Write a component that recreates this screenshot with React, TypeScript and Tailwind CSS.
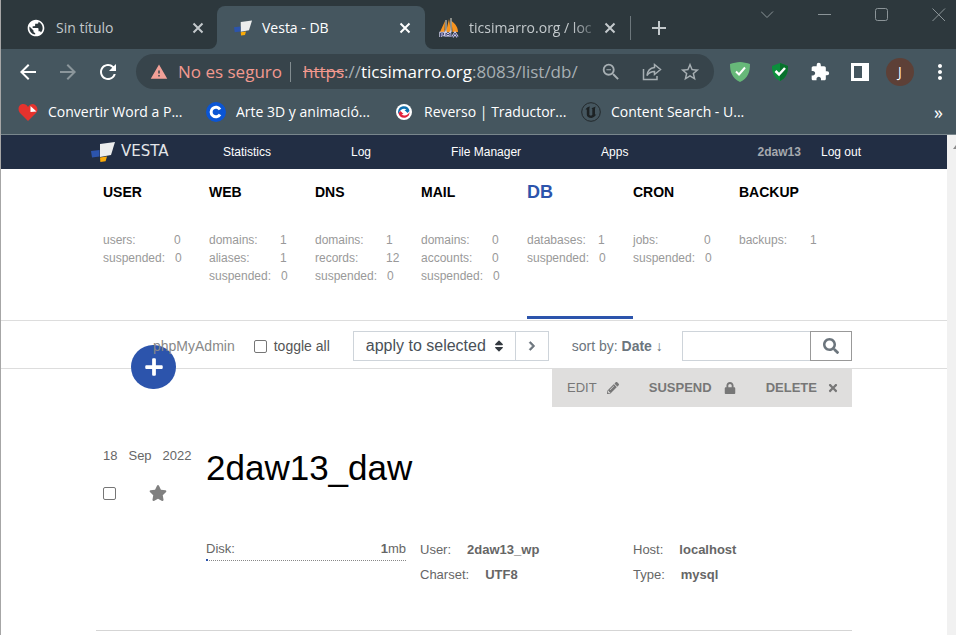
import React from "react";
import {
  MdArrowBack,
  MdArrowForward,
  MdExtension,
  MdMoreVert,
  MdPublic,
  MdRefresh,
  MdStarBorder,
  MdWarning,
  MdZoomOut,
} from "react-icons/md";
import { FaChevronRight, FaLock, FaPencilAlt, FaPlus, FaSearch, FaSort, FaStar, FaTimes } from "react-icons/fa";

function VestaMark({ className }: { className: string }) {
  return (
    <svg className={className} viewBox="0 0 24 20" aria-hidden="true">
      <path d="M9 2 L24 0 L20 13 L9 15 Z" fill="#eceded" />
      <path d="M0 9 L8.5 8 V14.5 L1 15.5 Z" fill="#2c54ac" />
      <path d="M9 15.6 L16 14.6 L14.6 19.2 L9.4 20 Z" fill="#fbab08" />
    </svg>
  );
}

function TabFlare({ className }: { className: string }) {
  return (
    <svg className={className} viewBox="0 0 8 8" aria-hidden="true">
      <path d="M8 0 V8 H0 A8 8 0 0 0 8 0 Z" fill="#45565f" />
    </svg>
  );
}

function CloseTab({ label }: { label: string }) {
  return (
    <button type="button" aria-label={label} className="shrink-0">
      <svg className="size-4" viewBox="0 0 16 16" fill="none" stroke="currentColor" strokeWidth="2">
        <path d="M3.500 3.500 L12.500 12.500 M12.500 3.500 L3.500 12.500" />
      </svg>
    </button>
  );
}

function TabStrip() {
  return (
    <header className="flex bg-[#2d383d] pt-1.5 text-sm text-[#c3c9cc]">
      <div className="flex h-[43px] w-[216px] items-center pr-[11px] pl-[25px]">
        <MdPublic className="size-5 shrink-0 text-white" />
        <span className="ml-2.5 flex-1">Sin título</span>
        <CloseTab label="Cerrar Sin título" />
      </div>
      <div className="relative flex h-[43px] w-[208px] items-center rounded-t-lg bg-[#45565f] pr-3 pl-[17px] text-white">
        <TabFlare className="absolute bottom-0 -left-2 size-2" />
        <VestaMark className="h-4 w-[18px] shrink-0" />
        <span className="ml-2.5 flex-1">Vesta - DB</span>
        <CloseTab label="Cerrar Vesta" />
        <TabFlare className="absolute -right-2 bottom-0 size-2 -scale-x-100" />
      </div>
      <div className="flex h-[43px] w-[205px] items-center pr-3 pl-[14px]">
        <svg className="size-5 shrink-0" viewBox="0 0 20 20" aria-hidden="true">
          <path d="M6 3 L1 14 H5.500 Z M10 1 L7 14 H12 Z M12.500 3 C17 6 19 10 19 14 H13.500 Z" fill="#f79420" />
          <path d="M7 2 V14 M12 0 V14" stroke="#e8e2d4" strokeWidth="1" />
          <path d="M1.500 19 V15 H4.500 V17 H1.500 M7 19 V15 L9 17 L11 15 V19 M13.500 19 L16 15 L18.500 19" fill="none" stroke="#c9c9e4" strokeWidth="2.500" />
          <path d="M1.500 19 V15 H4.500 V17 H1.500 M7 19 V15 L9 17 L11 15 V19 M13.500 19 L16 15 L18.500 19" fill="none" stroke="#454675" strokeWidth="1" />
        </svg>
        <span className="ml-2.5 flex-1 whitespace-nowrap [mask-image:linear-gradient(to_right,black_78%,transparent)]">
          ticsimarro.org / loc
        </span>
        <CloseTab label="Cerrar ticsimarro.org" />
      </div>
      <div className="flex h-[43px] items-center">
        <span className="h-6 w-px bg-[#6d777c]" />
        <button type="button" aria-label="Nueva pestaña" className="ml-5">
          <svg className="size-4" viewBox="0 0 16 16" fill="none" stroke="currentColor" strokeWidth="2">
            <path d="M8 1 V15 M1 8 H15" />
          </svg>
        </button>
      </div>
      <div className="ml-auto flex h-4 items-center gap-[43px] pr-2.5 text-[#8b9498]">
        <button type="button" aria-label="Buscar pestañas">
          <svg className="h-3.5 w-3.5" viewBox="0 0 14 14" fill="none" stroke="currentColor">
            <path d="M0 4.500 L6 10.500 L12 4.500" />
          </svg>
        </button>
        <button type="button" aria-label="Minimizar">
          <svg className="h-3.5 w-3.5" viewBox="0 0 14 14" fill="none" stroke="currentColor">
            <path d="M0 7.500 H13" />
          </svg>
        </button>
        <button type="button" aria-label="Maximizar">
          <svg className="h-3.5 w-3.5" viewBox="0 0 14 14" fill="none" stroke="currentColor">
            <rect x="0.500" y="1.500" width="12" height="12" rx="2" />
          </svg>
        </button>
        <button type="button" aria-label="Cerrar">
          <svg className="h-3.5 w-3.5" viewBox="0 0 14 14" fill="none" stroke="currentColor">
            <path d="M0.500 1.500 L13 14 M13 1.500 L0.500 14" />
          </svg>
        </button>
      </div>
    </header>
  );
}

function AddressBar() {
  return (
    <div className="flex h-[45px] items-center bg-[#45565f] pl-[15px] text-white">
      <button type="button" aria-label="Atrás">
        <MdArrowBack className="size-6" />
      </button>
      <button type="button" aria-label="Adelante" className="ml-4 text-[#8b969b]">
        <MdArrowForward className="size-6" />
      </button>
      <button type="button" aria-label="Recargar" className="ml-4">
        <MdRefresh className="size-6" />
      </button>
      <div className="ml-4 flex h-[35px] flex-1 items-center rounded-full bg-[#37444b] pr-[13px] pl-3.5 text-[17px] text-[#a7afb3]">
        <MdWarning className="size-[18px] shrink-0 text-[#f2a097]" />
        <span className="ml-2.5 whitespace-nowrap text-[#f2998f]">No es seguro</span>
        <span className="ml-2 h-5 w-px bg-[#828c90]" />
        <div role="textbox" aria-label="Dirección" tabIndex={0} className="ml-3 flex-1 whitespace-nowrap">
          <span className="text-[#f2998f] line-through">https</span>://
          <span className="text-white">ticsimarro.org</span>:8083/list/db/
        </div>
        <button type="button" aria-label="Zoom">
          <MdZoomOut className="size-[22px]" />
        </button>
        <button type="button" aria-label="Compartir" className="ml-5">
          <svg className="size-5" viewBox="0 0 20 20" fill="none" stroke="currentColor" strokeWidth="1.500">
            <path d="M1.500 7 V17.500 H15 V14" />
            <path d="M12.500 2.500 L18.500 7.500 L12.500 12.500 V9.500 C9 9.500 7 10.500 5 13.500 C5.500 9 8 6 12.500 5.500 Z" />
          </svg>
        </button>
        <button type="button" aria-label="Añadir a marcadores" className="ml-[17px]">
          <MdStarBorder className="size-[22px]" />
        </button>
      </div>
      <button type="button" aria-label="AdGuard" className="ml-4">
        <svg className="h-5 w-5" viewBox="0 0 20 20">
          <path d="M10 0 C13 0 17 1 20 2 C20 10 18 16 10 20 C2 16 0 10 0 2 C3 1 7 0 10 0 Z" fill="#67b879" />
          <path d="M6 9.500 L9 12.500 L15 5.500" fill="none" stroke="#fff" strokeWidth="2" />
        </svg>
      </button>
      <button type="button" aria-label="Protección" className="ml-[22px]">
        <svg className="h-[18px] w-4" viewBox="0 0 16 18">
          <path d="M8 0 L16 3 C16 10 14 15 8 18 C2 15 0 10 0 3 Z" fill="#0c8f3c" />
          <path d="M8 0 L16 3 C16 10 14 15 8 18 Z" fill="#08702c" />
          <path d="M3.500 8 L7 11.500 L13 5" fill="none" stroke="#fff" strokeWidth="2.500" />
        </svg>
      </button>
      <button type="button" aria-label="Extensiones" className="ml-[22px]">
        <MdExtension className="size-5" />
      </button>
      <button type="button" aria-label="Panel lateral" className="ml-[21px] flex h-[18px] w-[18px] border-[3px] border-r-[7px] border-white" />
      <button
        type="button"
        aria-label="Perfil"
        className="ml-[17px] flex size-7 items-center justify-center rounded-full bg-[#5d4037] text-sm"
      >
        J
      </button>
      <button type="button" aria-label="Menú" className="ml-3.5 mr-1">
        <MdMoreVert className="size-6" />
      </button>
    </div>
  );
}

function Bookmarks() {
  return (
    <nav
      aria-label="Marcadores"
      className="flex h-[41px] items-center border-b border-[#79868c] bg-[#45565f] pb-1 pl-[17px] text-sm whitespace-nowrap text-white"
    >
      <a href="#word" className="flex w-[188px] items-center gap-2.5">
        <svg className="size-5" viewBox="0 0 20 20" aria-hidden="true">
          <path d="M10 19 L2 11 C-1 7 1 2 5 2 C7.500 2 9 3 10 5 C11 3 13 2 15 2 C19 3 21 8 18 11 Z" fill="#e5322d" />
          <path d="M12.500 4 L18.500 9.500 L12.500 10 Z" fill="#fff" />
        </svg>
        Convertir Word a P...
      </a>
      <a href="#arte" className="flex w-[188px] items-center gap-2.5">
        <svg className="size-5" viewBox="0 0 20 20" aria-hidden="true">
          <circle cx="10" cy="10" r="10" fill="#0b55d4" />
          <path d="M14 7.500 A4.800 4.800 0 1 0 14 12.500" fill="none" stroke="#fff" strokeWidth="3" />
        </svg>
        Arte 3D y animació...
      </a>
      <a href="#reverso" className="flex w-[187px] items-center gap-2.5">
        <svg className="size-5" viewBox="0 0 20 20" aria-hidden="true">
          <circle cx="10" cy="10" r="8" fill="#fff" />
          <path d="M4.500 12 A5.500 5.500 0 0 1 8 4.500 C12 3.500 15 5.500 15.500 9 L13.500 11 L10.500 8 L12.500 7.800 C10.500 5.500 6 7 4.500 12 Z" fill="#0e6fae" />
          <path d="M15.500 10 A5.500 5.500 0 0 1 12 15.500 C8 16.500 5 14.500 4.500 11 L6.500 9 L9.500 12 L7.500 12.200 C10 14.500 14 13.500 15.500 10 Z" fill="#e2213b" />
        </svg>
        Reverso | Traductor...
      </a>
      <a href="#unreal" className="flex items-center gap-2.5">
        <svg className="size-5" viewBox="0 0 20 20" aria-hidden="true">
          <circle cx="10" cy="10" r="9.300" fill="none" stroke="#22282b" strokeWidth="1" />
          <path d="M4.500 7.500 C5.500 5.500 7.500 4.500 9 4.500 C8.400 5.500 8.400 7 8.400 8 V13 L10 13.800 L11.300 13 V7 L10.500 6.300 L14.800 4.500 C14 5.500 14 7 14 8 V12.800 L15.300 12.300 C14 14.500 12.500 15.700 10.500 16 C7.500 16 5.800 14.500 5.800 12.500 V7.500 Z" fill="#1d2224" />
        </svg>
        Content Search - U...
      </a>
      <button type="button" aria-label="Más marcadores" className="mr-[13px] ml-auto text-lg leading-5">
        »
      </button>
    </nav>
  );
}

function TopNav() {
  return (
    <nav aria-label="Vesta" className="bg-[#222e44]">
      <div className="mx-auto flex h-[34px] w-full max-w-[774px] items-center pl-1 text-xs text-white">
        <a href="#home" className="mr-[48px] flex w-[84px] items-center gap-1.5">
          <VestaMark className="h-5 w-6 shrink-0" />
          <span className="font-['DejaVu_Sans',sans-serif] text-[15px] text-[#e4e6e9]">VESTA</span>
        </a>
        <div className="flex gap-20 whitespace-nowrap">
          <a href="#statistics">Statistics</a>
          <a href="#log">Log</a>
          <a href="#files">File Manager</a>
          <a href="#apps">Apps</a>
        </div>
        <a href="#profile" className="ml-auto font-bold text-[#a5a9ae]">
          2daw13
        </a>
        <a href="#logout" className="ml-5 whitespace-nowrap">
          Log out
        </a>
      </div>
    </nav>
  );
}

const sections: { name: string; active?: boolean; stats: [string, number][] }[] = [
  { name: "USER", stats: [["users", 0], ["suspended", 0]] },
  { name: "WEB", stats: [["domains", 1], ["aliases", 1], ["suspended", 0]] },
  { name: "DNS", stats: [["domains", 1], ["records", 12], ["suspended", 0]] },
  { name: "MAIL", stats: [["domains", 0], ["accounts", 0], ["suspended", 0]] },
  { name: "DB", active: true, stats: [["databases", 1], ["suspended", 0]] },
  { name: "CRON", stats: [["jobs", 0], ["suspended", 0]] },
  { name: "BACKUP", stats: [["backups", 1]] },
];

function SectionMenu() {
  return (
    <nav aria-label="Sections" className="border-b border-[#dddddd] pb-px">
      <div className="mx-auto grid w-full max-w-[756px] grid-cols-7 px-[7px]">
        {sections.map((s) => (
          <a
            key={s.name}
            href={"#" + s.name.toLowerCase()}
            className={
              s.active
                ? "border-b-[3px] border-[#2c54ac] pt-[11px] pb-[31px]"
                : "border-b-[3px] border-transparent pt-[11px] pb-[31px]"
            }
          >
            <span
              className={
                s.active
                  ? "block text-lg leading-6 font-bold text-[#2c54ac]"
                  : "block text-sm leading-6 font-bold text-black"
              }
            >
              {s.name}
            </span>
            <span className="mt-[27px] block text-xs leading-[18px] text-[#999999]">
              {s.stats.map(([label, value]) => (
                <span key={label} className="flex gap-2.5">
                  <span className="min-w-[61px]">{label}:</span>
                  <span>{value}</span>
                </span>
              ))}
            </span>
          </a>
        ))}
      </div>
    </nav>
  );
}

function Toolbar() {
  return (
    <div className="border-b border-[#dddddd]">
      <div className="relative mx-auto flex w-full max-w-[756px] items-center pt-2.5 pb-[7px] pl-[57px] text-sm whitespace-nowrap text-[#6c757d]">
        <button
          type="button"
          aria-label="Add database"
          className="absolute top-6 left-[35px] flex h-11 w-[45px] items-center justify-center rounded-full bg-[#2c54ac] text-white"
        >
          <FaPlus className="size-5" />
        </button>
        <a href="#phpmyadmin" className="relative text-[#888888]">
          phpMyAdmin
        </a>
        <label className="ml-[19px] flex items-center gap-[7px] text-[#555555]">
          <input type="checkbox" className="size-[13px] appearance-none rounded-[2px] border border-[#767676] bg-white" />
          toggle all
        </label>
        <div className="relative ml-[23px] text-[#495057]">
          <select
            aria-label="Bulk action"
            className="block h-[30px] w-[163px] appearance-none border border-[#ced4da] bg-white pl-3 text-base"
          >
            <option>apply to selected</option>
            <option>suspend</option>
            <option>delete</option>
          </select>
          <FaSort className="pointer-events-none absolute top-2 right-2.5 size-3.5 text-[#343a40]" />
        </div>
        <button
          type="button"
          aria-label="Apply"
          className="-ml-px flex h-[30px] w-[34px] items-center justify-center border border-[#ced4da]"
        >
          <FaChevronRight className="size-2.5 stroke-current stroke-[40]" />
        </button>
        <button type="button" className="ml-[23px]">
          sort by: <b>Date</b> ↓
        </button>
        <form className="ml-auto flex">
          <input type="search" aria-label="Search" className="h-[30px] w-[129px] border border-[#ced4da] px-2" />
          <button
            type="button"
            aria-label="Search"
            className="-ml-px flex h-[30px] w-[42px] items-center justify-center border border-[#999999]"
          >
            <FaSearch className="size-4" />
          </button>
        </form>
      </div>
    </div>
  );
}

function DatabaseItem() {
  return (
    <article className="mx-auto w-full max-w-[756px] border-b border-[#d5d5d5] text-[13px] text-[#666666]">
      <div className="flex justify-end">
        <div className="flex h-[38px] w-[300px] items-center justify-between bg-[#dfdedd] pr-[13px] pl-[15px] text-[#777777]">
          <button type="button" className="flex items-center gap-2.5">
            EDIT <FaPencilAlt className="size-3" />
          </button>
          <button type="button" className="flex items-center gap-3 font-bold">
            SUSPEND <FaLock className="size-3" />
          </button>
          <button type="button" className="flex items-center gap-2.5 font-bold">
            DELETE <FaTimes className="size-3" />
          </button>
        </div>
      </div>
      <div className="grid grid-cols-[103px_1fr] px-[7px] pt-10">
        <div>
          <div className="flex gap-[11px] leading-[18px]">
            <span>18</span>
            <span>Sep</span>
            <span>2022</span>
          </div>
          <div className="mt-[19px] flex items-center gap-[33px]">
            <input
              type="checkbox"
              aria-label="Select 2daw13_daw"
              className="size-[13px] appearance-none rounded-[2px] border border-[#767676] bg-white"
            />
            <button type="button" aria-label="Star">
              <FaStar className="size-[18px] text-[#808080]" />
            </button>
          </div>
        </div>
        <h1 className="text-[35px] leading-[42px] text-black">2daw13_daw</h1>
      </div>
      <div className="mt-[35px] grid grid-cols-[200px_213px_1fr] pr-[7px] pb-[43px] pl-[110px] leading-[25px]">
        <div>
          <div className="relative flex justify-between border-b border-dotted border-[#888888] leading-[23px]">
            <span>Disk:</span>
            <span>
              <b>1</b>mb
            </span>
            <span className="absolute -bottom-px left-0 h-0.5 w-0.5 bg-[#2c54ac]" />
          </div>
        </div>
        <div className="ml-3.5">
          <div className="flex gap-4">
            User: <b>2daw13_wp</b>
          </div>
          <div className="flex gap-4">
            Charset: <b>UTF8</b>
          </div>
        </div>
        <div className="ml-3.5">
          <div className="flex gap-4">
            Host: <b>localhost</b>
          </div>
          <div className="flex gap-4">
            Type: <b>mysql</b>
          </div>
        </div>
      </div>
    </article>
  );
}

export default function App() {
  return (
    <div className="flex min-h-screen flex-col border-l border-[#a6a6a6] bg-white">
      <div className="font-['Open_Sans','Noto_Sans',sans-serif]">
        <TabStrip />
        <AddressBar />
        <Bookmarks />
      </div>
      <div className="flex flex-1">
        <main className="min-w-0 flex-1 font-['Liberation_Sans',Arial,sans-serif]">
          <TopNav />
          <SectionMenu />
          <Toolbar />
          <DatabaseItem />
        </main>
        <div className="flex w-[9px] justify-end overflow-hidden bg-[#f1f1f1] pt-2.5">
          <svg className="h-1 w-[3px]" viewBox="0 0 3 4" aria-hidden="true">
            <path d="M0 4 L3 0 V4 Z" fill="#8a8a8a" />
          </svg>
        </div>
      </div>
    </div>
  );
}
